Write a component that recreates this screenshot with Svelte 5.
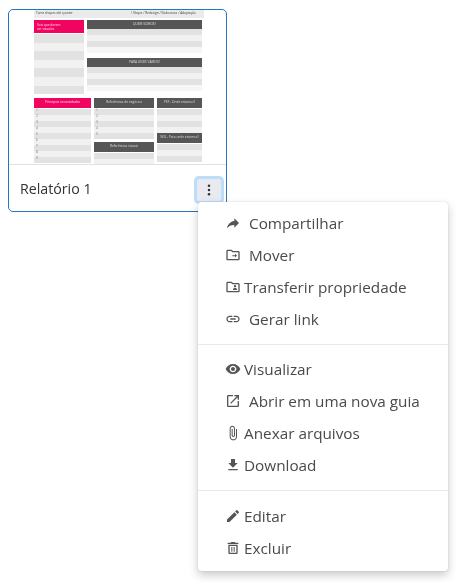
<script>
	const ICONS = {
		share: 'M14 9V5l7 7-7 7v-4.1c-5 0-8.5 1.6-11 5.1 1-5 4-10 11-11z',
		move: 'M20 6h-8l-2-2H4c-1.1 0-2 .9-2 2v12c0 1.1.9 2 2 2h16c1.1 0 2-.9 2-2V8c0-1.1-.9-2-2-2zm0 12H4V6h5.17l2 2H20v10zm-5-4.2h-4v-1.6h4V10l3 2.9-3 2.9v-2z',
		owner: 'M20 6h-8l-2-2H4c-1.1 0-2 .9-2 2v12c0 1.1.9 2 2 2h16c1.1 0 2-.9 2-2V8c0-1.1-.9-2-2-2zm0 12H4V6h5.17l2 2H20v10zm-8-1.5v-1.2c0-1.2 1.9-1.8 3-1.8s3 .6 3 1.8v1.2h-6zm3-4a1.8 1.8 0 1 1 0-3.6 1.8 1.8 0 0 1 0 3.6z',
		link: 'M3.9 12c0-1.71 1.39-3.1 3.1-3.1h4V7H7c-2.76 0-5 2.24-5 5s2.24 5 5 5h4v-1.9H7c-1.71 0-3.1-1.39-3.1-3.1zM8 13h8v-2H8v2zm9-6h-4v1.9h4c1.71 0 3.1 1.39 3.1 3.1s-1.39 3.1-3.1 3.1h-4V17h4c2.76 0 5-2.24 5-5s-2.24-5-5-5z',
		eye: 'M12 4.5C7 4.5 2.73 7.61 1 12c1.73 4.39 6 7.5 11 7.5s9.27-3.11 11-7.5c-1.73-4.39-6-7.5-11-7.5zM12 17c-2.76 0-5-2.24-5-5s2.24-5 5-5 5 2.24 5 5-2.24 5-5 5zm0-8c-1.66 0-3 1.34-3 3s1.34 3 3 3 3-1.34 3-3-1.34-3-3-3z',
		open: 'M19 19H5V5h7V3H5c-1.11 0-2 .9-2 2v14c0 1.1.89 2 2 2h14c1.1 0 2-.9 2-2v-7h-2v7zM14 3v2h3.59l-9.83 9.83 1.41 1.41L19 6.41V10h2V3h-7z',
		clip: 'M16.5 6v11.5c0 2.21-1.79 4-4 4s-4-1.79-4-4V5c0-1.38 1.12-2.5 2.5-2.5s2.5 1.12 2.5 2.5v10.5c0 .55-.45 1-1 1s-1-.45-1-1V6H10v9.5c0 1.38 1.12 2.5 2.5 2.5s2.5-1.12 2.5-2.5V5c0-2.21-1.79-4-4-4S7 2.79 7 5v12.5c0 3.04 2.46 5.5 5.5 5.5s5.5-2.46 5.5-5.5V6h-1.5z',
		download: 'M19 9h-4V3H9v6H5l7 7 7-7zM5 18v2h14v-2H5z',
		edit: 'M3 17.25V21h3.75L17.81 9.94l-3.75-3.75L3 17.25zM20.71 7.04c.39-.39.39-1.02 0-1.41l-2.34-2.34c-.39-.39-1.02-.39-1.41 0l-1.83 1.83 3.75 3.75 1.83-1.83z',
		trash: 'M5 7v12c0 1.1.9 2 2 2h10c1.1 0 2-.9 2-2V7H5zm2 2h10v10H7V9zm8.5-5l-1-1h-5l-1 1H4v2h16V4zM9.5 10.5H11v7H9.5zm3.5 0h1.5v7H13z'
	};

	const GROUPS = [
		[
			{ icon: 'share', label: 'Compartilhar', wide: true },
			{ icon: 'move', label: 'Mover', wide: true },
			{ icon: 'owner', label: 'Transferir propriedade' },
			{ icon: 'link', label: 'Gerar link', wide: true }
		],
		[
			{ icon: 'eye', label: 'Visualizar' },
			{ icon: 'open', label: 'Abrir em uma nova guia', wide: true },
			{ icon: 'clip', label: 'Anexar arquivos' },
			{ icon: 'download', label: 'Download' }
		],
		[
			{ icon: 'edit', label: 'Editar' },
			{ icon: 'trash', label: 'Excluir' }
		]
	];

	const range = (n) => Array.from({ length: n }, (_, i) => i);
</script>

<div class="page">
	<article class="card">
		<div class="thumb">
			<div class="sheet">
				<div class="sheet-top">
					<span>Tame shapes del cyanter</span>
					<span>/ Shape / Redesign / Elaborarca / Adaptação</span>
				</div>

				<div class="upper">
					<div class="col col-a">
						<div class="head pink tall">Sois que devem<br />ser visuales</div>
						<div class="stripes big">
							{#each range(7) as _}<i></i>{/each}
						</div>
					</div>
					<div class="col col-b">
						<div class="block first">
							<div class="head dark">QUEM SOMOS?</div>
							<div class="stripes mid">
								{#each range(4) as _}<i></i>{/each}
							</div>
						</div>
						<div class="block">
							<div class="head dark">PARA ONDE VAMOS?</div>
							<div class="stripes mid">
								{#each range(4) as _}<i></i>{/each}
							</div>
						</div>
					</div>
				</div>

				<div class="lower">
					<div class="col col-c">
						<div class="head pink low">Principais necessidades</div>
						<div class="stripes small">
							{#each range(9) as i}<i>{i + 1}</i>{/each}
						</div>
					</div>
					<div class="col col-d">
						<div class="head dark low">Referências de negócios</div>
						<div class="stripes small">
							{#each range(5) as i}<i>{i + 1}</i>{/each}
						</div>
						<div class="head dark low second">Referências visuais</div>
						<div class="stripes small">
							{#each range(3) as _}<i></i>{/each}
						</div>
					</div>
					<div class="col col-e">
						<div class="head dark low">PKF - Onde estamos?</div>
						<div class="stripes small">
							{#each range(4) as _}<i></i>{/each}
						</div>
						<div class="head dark low">SEO - Para onde estamos?</div>
						<div class="stripes small">
							{#each range(3) as _}<i></i>{/each}
						</div>
					</div>
				</div>
			</div>
		</div>
		<footer class="card-foot">
			<span class="title">Relatório 1</span>
			<button class="more" aria-label="Mais opções">
				<svg viewBox="0 0 24 24" width="16" height="16">
					<circle cx="12" cy="5.5" r="1.9" />
					<circle cx="12" cy="12" r="1.9" />
					<circle cx="12" cy="18.5" r="1.9" />
				</svg>
			</button>
		</footer>
	</article>

	<div class="menu">
		{#each GROUPS as group, g}
			{#if g > 0}<hr />{/if}
			<ul class:middle={g === 1}>
				{#each group as item}
					<li class:wide={item.wide}>
						<svg viewBox="0 0 24 24" width="16" height="16"><path d={ICONS[item.icon]} fill-rule="evenodd" /></svg>
						<span>{item.label}</span>
					</li>
				{/each}
			</ul>
		{/each}
	</div>
</div>

<style>
	:global(body) {
		margin: 0;
		background: #fff;
	}
	.page {
		position: relative;
		width: 466px;
		height: 583px;
		overflow: hidden;
		padding: 9px 0 0 8px;
		box-sizing: border-box;
		font-family: 'Open Sans', 'Liberation Sans', sans-serif;
	}
	.card {
		width: 219px;
		height: 203px;
		box-sizing: border-box;
		border: 1px solid #2a74bd;
		border-radius: 5px;
		display: flex;
		flex-direction: column;
		overflow: hidden;
	}
	.thumb {
		height: 154px;
		flex-shrink: 0;
		overflow: hidden;
		border-bottom: 1px solid #dde1e8;
		padding-left: 25px;
	}
	.sheet {
		width: 170px;
		filter: blur(0.6px);
		display: flex;
		flex-direction: column;
		font-size: 3.2px;
		line-height: 1;
	}
	.sheet-top {
		height: 8px;
		flex-shrink: 0;
		background: #ebebeb;
		color: #444;
		display: flex;
		justify-content: space-between;
		align-items: center;
		padding: 0 8px 0 2px;
		box-sizing: border-box;
	}
	.upper {
		display: flex;
		gap: 3px;
		margin-top: 2px;
		height: 73px;
		flex-shrink: 0;
	}
	.lower {
		display: flex;
		gap: 3px;
		margin-top: 5px;
		flex: 1;
		overflow: hidden;
	}
	.col {
		display: flex;
		flex-direction: column;
		flex-shrink: 0;
	}
	.col-a { width: 50px; }
	.col-b { width: 115px; }
	.col-c { width: 57px; }
	.col-d { width: 60px; }
	.col-e { width: 45px; }
	.block.first { height: 38px; }
	.head {
		height: 9px;
		flex-shrink: 0;
		color: #ddd;
		display: flex;
		align-items: center;
		justify-content: center;
		text-align: center;
		white-space: nowrap;
	}
	.head.dark { background: #565656; }
	.head.pink { background: #f0045f; color: #fde; }
	.head.tall {
		height: 13px;
		display: block;
		padding: 2.5px 3px;
		box-sizing: border-box;
		text-align: left;
		line-height: 4.5px;
		margin-bottom: 1px;
	}
	.head.low { height: 10px; margin-bottom: 1px; }
	.head.second { margin-top: 3px; }
	.stripes {
		display: flex;
		flex-direction: column;
	}
	.stripes i {
		display: block;
		font-style: normal;
		color: #777;
		padding-left: 2px;
		box-sizing: border-box;
	}
	.stripes i:nth-child(odd) { background: #e2e2e2; }
	.stripes i:nth-child(even) { background: #f1f1f1; }
	.stripes.big i { height: 8.6px; }
	.stripes.mid i { height: 6px; }
	.stripes.mid i:last-child { background: #f6f6f6; }
	.stripes.small i { height: 6px; }
	.card-foot {
		flex: 1;
		display: flex;
		align-items: center;
		justify-content: space-between;
		padding: 0 5px 0 11px;
	}
	.title {
		font-size: 14.2px;
		color: #333;
		filter: blur(0.25px);
	}
	.more {
		width: 24px;
		height: 22px;
		margin-top: 3px;
		padding: 0;
		border: 0;
		border-radius: 2px;
		background: #e8eaef;
		box-shadow: 0 0 0 3px #bcdefb;
		display: flex;
		align-items: center;
		justify-content: center;
	}
	.more svg { fill: #333; }
	.menu {
		position: absolute;
		left: 198px;
		top: 202px;
		width: 250px;
		height: 369px;
		box-sizing: border-box;
		padding: 5px 0;
		background: #fff;
		border-radius: 3px;
		box-shadow: 0 0 1px rgba(0, 0, 0, 0.3), 0 4px 10px rgba(0, 0, 0, 0.22);
	}
	.menu ul {
		list-style: none;
		margin: 0;
		padding: 0;
		filter: blur(0.25px);
	}
	.menu ul.middle { margin-bottom: 1px; }
	.menu li {
		height: 32px;
		display: flex;
		align-items: center;
		gap: 3px;
		padding-left: 27px;
		font-size: 15.3px;
		color: #4a4a4a;
	}
	.menu li span { margin-top: -1px; }
	.menu li.wide { gap: 8px; }
	.menu li svg {
		fill: #555;
		flex-shrink: 0;
	}
	hr {
		border: 0;
		border-top: 1px solid #e8eaee;
		margin: 9px 0 8px;
	}
	hr:last-of-type { margin-bottom: 9px; }
</style>
